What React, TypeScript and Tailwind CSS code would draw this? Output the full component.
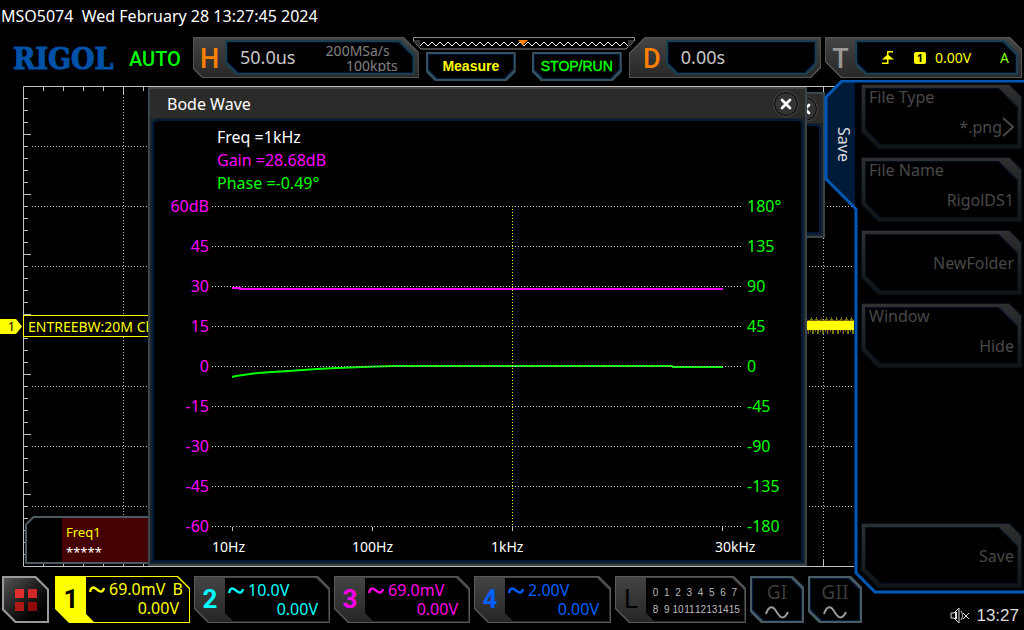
import React from "react";
import { X } from "lucide-react";

const channels = [
  { id: 2, scale: "10.0V", offset: "0.00V", color: "text-[#00ffff]" },
  { id: 3, scale: "69.0mV", offset: "0.00V", color: "text-[#ff00e6]" },
  { id: 4, scale: "2.00V", offset: "0.00V", color: "text-[#0060ff]" },
];

const gainLabels = ["60dB", "45", "30", "15", "0", "-15", "-30", "-45", "-60"];
const phaseLabels = ["180°", "135", "90", "45", "0", "-45", "-90", "-135", "-180"];

const menuItems = [
  { title: "File Type", value: "*.png", arrow: true },
  { title: "File Name", value: "RigolDS1" },
  { title: "", value: "NewFolder" },
  { title: "Window", value: "Hide" },
];

const range = (n: number) => Array.from({ length: n }, (_, i) => i);

const zigzag = range(53)
  .map((i) => `${7 + i * 4},${i % 2 ? 5 : 9}`)
  .join(" ");

const Tilde = () => (
  <svg width="16" height="10" viewBox="0 0 16 10" fill="none" stroke="currentColor" strokeWidth="2.4">
    <path d="M1 7C2 2 4 2 6 3L10 6C12 7 14 7 15 3" />
  </svg>
);

const TopPanel = ({ letter, color, outer, inner, className, children }: {
  letter: string;
  color: string;
  outer: string;
  inner: string;
  className: string;
  children: React.ReactNode;
}) => (
  <div className={`h-[41px] bg-[#565656] p-px ${outer} ${className}`}>
    <div className={`flex h-full bg-linear-to-b from-[#444] to-[#282828] pr-[3px] py-[2px] ${outer}`}>
      <span className={`shrink-0 text-center font-[Roboto] text-[27px] leading-[38px] font-medium ${color}`}>{letter}</span>
      <div className={`min-w-0 flex-1 bg-[#1d3f4d] p-[2px] ${inner}`}>
        <div className={`h-full bg-[#00102a] p-px ${inner}`}>
          <div className={`flex h-full items-center bg-black ${inner}`}>{children}</div>
        </div>
      </div>
    </div>
  </div>
);

const keyShape = "[clip-path:polygon(0_0,100%_0,100%_calc(100%-9px),calc(100%-9px)_100%,9px_100%,0_calc(100%-9px))]";

const TopKey = ({ label, className }: { label: string; className: string }) => (
  <button className={`h-[29px] w-[90px] bg-[#35505c] p-[2px] ${keyShape}`}>
    <span className={`block h-full bg-[#001a3c] p-px ${keyShape}`}>
      <span className={`block h-full bg-black text-center font-['Liberation_Sans'] leading-[22px] ${keyShape} ${className}`}>
        {label}
      </span>
    </span>
  </button>
);

const MemoryBar = () => (
  <svg width="222" height="13" fill="none">
    <path d="M0.5 0.5H221.5V4L213 12H8L0.5 4Z" stroke="#8a8a90" />
    <path d="M1 3V4L7 10V3ZM221 3V4L215 10V3Z" fill="#333338" />
    <polyline points={zigzag} stroke="#fff" />
    <path d="M105 3H115L110 8Z" fill="#ff8000" />
  </svg>
);

const TopBar = () => (
  <div className="flex h-[43px] items-start pr-[2px]">
    <div className="w-[126px] shrink-0 pl-[13px] font-['DejaVu_Serif_Condensed'] text-[30px] leading-[43px] font-bold text-[#0052a8] [-webkit-text-stroke:1px_#0052a8]">
      RIGOL
    </div>
    <div className="w-[67px] shrink-0 pl-[3px] font-[Roboto] text-[20px] font-medium leading-[44px] text-[#00ff00]">AUTO</div>
    <TopPanel
      letter="H"
      color="w-[31px] text-[#ff8000]"
      className="min-w-0 flex-[226]"
      outer="[clip-path:polygon(0_0,calc(100%-15px)_0,100%_15px,100%_100%,9px_100%,0_calc(100%-9px))]"
      inner="[clip-path:polygon(0_0,calc(100%-14px)_0,100%_14px,100%_100%,11px_100%,0_calc(100%-11px))]"
    >
      <span className="flex-1 pl-3 text-[18px] text-[#c8c8c8]">50.0us</span>
      <div className="pr-[14px] text-right text-[14px] leading-[15px] text-[#808080]">
        <div className="pr-2">200MSa/s</div>
        <div>100kpts</div>
      </div>
    </TopPanel>
    <div className="-mx-[6px] w-[222px] shrink-0">
      <MemoryBar />
      <div className="mt-[2px] flex justify-between px-[13px]">
        <TopKey label="Measure" className="text-[14px] font-bold text-[#ffff00]" />
        <TopKey label="STOP/RUN" className="text-[14px] text-[#00ff00] [-webkit-text-stroke:0.4px_#00ff00]" />
      </div>
    </div>
    <TopPanel
      letter="D"
      color="w-[36px] pl-2 text-[#ff8000]"
      className="min-w-0 flex-[192]"
      outer="[clip-path:polygon(16px_0,100%_0,100%_calc(100%-10px),calc(100%-10px)_100%,0_100%,0_16px)]"
      inner="[clip-path:polygon(0_0,100%_0,100%_calc(100%-10px),calc(100%-10px)_100%,10px_100%,0_calc(100%-10px))]"
    >
      <span className="pl-3 text-[18px] text-[#c8c8c8]">0.00s</span>
    </TopPanel>
    <TopPanel
      letter="T"
      color="w-[29px] text-[#999]"
      className="ml-1 min-w-0 flex-[197]"
      outer="[clip-path:polygon(0_0,calc(100%-12px)_0,100%_12px,100%_100%,16px_100%,0_calc(100%-16px))]"
      inner="[clip-path:polygon(0_0,calc(100%-13px)_0,100%_13px,100%_100%,10px_100%,0_calc(100%-10px))]"
    >
      <svg className="ml-6 shrink-0" width="12" height="14" fill="#ffff00">
        <path d="M5 0H11V1.5H6.5V4L12 8.5H6.5V13H0V11.5H5V8.5H0L5 4Z" />
      </svg>
      <span className="ml-5 h-3 w-3 rounded-xs bg-[#ffff00] text-center text-[11px] leading-3 font-bold text-black">1</span>
      <span className="ml-[9px] flex-1 text-[14px] text-[#ffff00]">0.00V</span>
      <span className="pr-[6px] text-[14px] text-[#80ff00]">A</span>
    </TopPanel>
  </div>
);

const Graticule = () => (
  <svg className="absolute inset-0 h-full w-full" fill="none" stroke="#c0c0c0">
    <path d="M860 6.5H23.5V486.5H860" />
    {range(40).map((i) => (
      <g key={i}>
        <path d={`M${43.5 + i * 20} 7V${i % 5 === 4 ? 14 : 11}`} />
        <path d={`M${43.5 + i * 20} 486V${i % 5 === 4 ? 479 : 482}`} />
        <path d={`M24 ${18.5 + i * 12}H${i % 5 === 3 ? 31 : 28}`} />
      </g>
    ))}
    <path d="M123.5 14V479M823.5 14V479" strokeDasharray="1 2" />
    {range(7).map((i) => (
      <path key={i} d={`M32 ${66.5 + i * 60}H854`} strokeDasharray="1 2" />
    ))}
    {range(48).map((i) => (
      <path key={i} d={`M${806.5 + i} ${237 + ((i * i * 7) % 5)}V${250 + ((i * i * 3 + i) % 5)}`} stroke={i % 7 === 1 ? "#501040" : "#787800"} />
    ))}
    <path d="M806 245.5H860" stroke="#ffff00" strokeWidth="9" />
  </svg>
);

const CloseButton = ({ label }: { label: string }) => (
  <button aria-label={label} className="flex h-6 w-6 items-center justify-center rounded-full border border-black bg-[#333] text-white outline outline-[#444]">
    <X size={16} strokeWidth={4} />
  </button>
);

const curve = "20,171 24,170 31,169 38,168 46,167 60,166 77,165 91,164 105,163 125,162 150,161 180,160 460,160 461,161 511,161";

const BodePlot = () => (
  <div className="flex text-[16px]">
    <div className="w-[55px] shrink-0 text-right text-[#ff00ff]">
      {gainLabels.map((label) => (
        <div key={label} className="h-10 leading-10">{label}</div>
      ))}
    </div>
    <div className="min-w-0 flex-1 px-[3px] pt-5">
      <svg className="w-full" height="328" viewBox="0 0 531 328" preserveAspectRatio="none" fill="none">
        <path d="M20.5 321V325M160.5 321V325M300.5 321V325M510.5 321V325" stroke="#c0c0c0" />
        <path d="M20 82H28V83H511" stroke="#ff00ff" strokeWidth="2" />
        <polyline points={curve} stroke="#00ff00" strokeWidth="2" />
        {range(9).map((i) => (
          <path key={i} d={`M0 ${0.5 + i * 40}H531`} stroke="#c0c0c0" strokeDasharray="1 2" />
        ))}
        <path d="M300.5 0V320" stroke="#ffff00" strokeDasharray="1 2" />
      </svg>
    </div>
    <div className="w-[55px] shrink-0 text-[#00ff00]">
      {phaseLabels.map((label) => (
        <div key={label} className="h-10 pl-px leading-10">{label}</div>
      ))}
    </div>
  </div>
);

const BodeWindow = () => (
  <section className="absolute top-[7px] right-[47px] left-[148px] border-2 border-[#38454b] border-t-[#444] bg-[#1c2328]">
    <header className="flex h-[29px] items-center justify-between bg-[#2b2c2a] pr-[7px] pl-[17px]">
      <h1 className="text-[16px] text-white">Bode Wave</h1>
      <CloseButton label="Close Bode Wave" />
    </header>
    <div className="mx-[2px] mt-px mb-[2px] rounded-t-md border-2 border-[#001a38] bg-black pb-[3px]">
      <div className="pt-[5px] pl-[63px] text-[16px] leading-[23px]">
        <p className="text-white">Freq =1kHz</p>
        <p className="text-[#ff00ff]">Gain =28.68dB</p>
        <p className="text-[#00ff00]">Phase =-0.49°</p>
      </div>
      <div className="-mt-[9px]">
        <BodePlot />
      </div>
      <div className="-mt-[9px] grid grid-cols-[140fr_139fr_224fr_86fr] pl-[58px] text-[14px] leading-5 text-white">
        <span>10Hz</span>
        <span>100Hz</span>
        <span>1kHz</span>
        <span>30kHz</span>
      </div>
    </div>
  </section>
);

const Scope = () => (
  <main className="relative min-h-[493px] flex-1 overflow-hidden">
    <Graticule />
    <div className="absolute top-[235px] left-[23px] h-[22px] w-[200px] border border-[#ffff00] bg-black pl-1 text-[14px] leading-[21px] whitespace-nowrap text-[#ffff00]">
      ENTREEBW:20M Ch1
    </div>
    <div className="absolute top-[239px] left-0 h-[15px] w-[22px] bg-[#ffff00] pl-2 text-[12px] leading-[15px] text-black [clip-path:polygon(0_0,16px_0,100%_50%,16px_100%,0_100%)]">
      1
    </div>
    <div className="absolute top-[436px] left-[25px] w-[200px] bg-[#4a5b62] p-[2px] [clip-path:polygon(8px_0,100%_0,100%_100%,0_100%,0_8px)]">
      <div className="bg-black pl-[35px] [clip-path:polygon(7px_0,100%_0,100%_100%,0_100%,0_7px)]">
        <div className="bg-[#450000] pt-1 pl-1 text-[13px] leading-[20px]">
          <p className="text-[#ffff00]">Freq1</p>
          <p className="text-white">*****</p>
        </div>
      </div>
    </div>
    <section className="absolute top-3 right-[29px] h-[146px] w-[200px] border-2 border-[#38454b] bg-[#1c2328]">
      <header className="flex h-[29px] items-center justify-end bg-[#2b2c2a] pr-[6px]">
        <CloseButton label="Close" />
      </header>
      <div className="mt-px mr-[2px] h-[110px] rounded-tr-md border-2 border-[#001a38] bg-black" />
    </section>
    <BodeWindow />
  </main>
);

const cardShape = "[clip-path:polygon(0_0,calc(100%-12px)_0,100%_12px,100%_100%,17px_100%,0_calc(100%-17px))]";
const cardInner = "[clip-path:polygon(0_0,calc(100%-19px)_0,100%_19px,100%_100%,15px_100%,0_calc(100%-15px))]";

const MenuCard = ({ title, value, arrow }: { title: string; value: string; arrow?: boolean }) => (
  <button className={`block h-[65px] w-full bg-[#04101c] p-px ${cardShape}`}>
    <span className={`block h-full bg-linear-to-b from-[#303030] to-[#121414] p-[3px] ${cardShape}`}>
      <span className={`block h-full bg-[#02101f] p-px ${cardInner}`}>
        <span className={`flex h-full flex-col bg-black px-[3px] text-[16px] leading-[22px] text-[#484848] ${cardInner}`}>
          {title && <span className="-mt-[3px] block text-left">{title}</span>}
          <span className={`flex items-center justify-end ${title ? "mt-2" : "my-auto"}`}>
            {value}
            {arrow && (
              <svg width="12" height="20" fill="none" stroke="currentColor" strokeWidth="2">
                <path d="M1 1L11 10L1 19" />
              </svg>
            )}
          </span>
        </span>
      </span>
    </span>
  </button>
);

const SideMenu = () => (
  <aside className="relative flex h-[514px] flex-col pt-1 pr-[2px] pb-[6px] pl-[7px]">
    <svg className="absolute top-0 -left-[30px]" width="200" height="514" fill="none">
      <path d="M1 100V18L16 1H31V128Z" fill="#001a3a" />
      <path d="M31 2H200V512H52L32 492Z" fill="#000" />
      <path d="M200 1H18L2 17V99L32 129V493L51 512H200" stroke="#0058b8" strokeWidth="3" />
    </svg>
    <span className="absolute top-[47px] -left-[22px] text-[16px] leading-[24px] text-[#ddd] [writing-mode:vertical-rl]">Save</span>
    <nav className="relative flex flex-1 flex-col gap-2">
      {menuItems.map((item) => (
        <MenuCard key={item.value} {...item} />
      ))}
      <div className="mt-auto">
        <MenuCard title="" value="Save" />
      </div>
    </nav>
  </aside>
);

const tileShape = "[clip-path:polygon(0_0,calc(100%-12px)_0,100%_12px,100%_100%,14px_100%,0_calc(100%-14px))]";
const tileInner = "[clip-path:polygon(0_0,calc(100%-12px)_0,100%_12px,100%_100%,8px_100%,0_calc(100%-8px))]";
const genShape = "[clip-path:polygon(0_0,calc(100%-11px)_0,100%_11px,100%_100%,11px_100%,0_calc(100%-11px))]";

const Tile = ({ label, color, children }: { label: string; color: string; children: React.ReactNode }) => (
  <button className={`block h-[47px] w-full bg-[#5a5a5a] p-px ${tileShape}`}>
    <span className={`flex h-full bg-linear-to-b from-[#444] to-[#262626] py-px pr-px ${tileShape}`}>
      <span className={`w-[30px] shrink-0 text-center font-[Roboto] text-[26px] leading-[43px] ${color}`}>{label}</span>
      <span className={`block min-w-0 flex-1 bg-black ${tileInner}`}>{children}</span>
    </span>
  </button>
);

const Reading = ({ scale, offset, limit }: { scale: string; offset: string; limit?: string }) => (
  <span className="block pt-[3px] text-[16px] leading-[19px]">
    <span className="flex items-center gap-1 pl-[3px]">
      <Tilde />
      {scale}
      {limit && <span className="ml-auto pr-[6px]">{limit}</span>}
    </span>
    <span className="block pr-[10px] text-right">{offset}</span>
  </span>
);

const Generator = ({ numeral }: { numeral: string }) => (
  <button className={`h-[47px] w-[54px] shrink-0 bg-[#4a5b62] p-[2px] ${genShape}`}>
    <span className={`block h-full bg-[#001a38] p-px ${genShape}`}>
      <span className={`flex h-full flex-col items-center bg-black text-[19px] leading-[27px] text-[#3c3c3c] ${genShape}`}>
        <span>
          G<span className="font-['DejaVu_Serif_Condensed']">{numeral}</span>
        </span>
        <svg width="24" height="13" fill="none" stroke="#999" strokeWidth="2">
          <path d="M1 8C4 -1 8 0 11 5S18 16 23 6" />
        </svg>
      </span>
    </span>
  </button>
);

const BottomBar = () => (
  <footer className="mt-[3px] mb-[7px] -mr-2 flex pl-[2px]">
    <button aria-label="Menu" className="mr-[6px] h-[47px] w-[47px] shrink-0 bg-[#999] p-[2px] [clip-path:polygon(0_0,calc(100%-13px)_0,100%_13px,100%_100%,13px_100%,0_calc(100%-13px))]">
      <span className="flex h-full items-center justify-center bg-linear-to-br from-[#555] to-black [clip-path:polygon(0_0,calc(100%-12px)_0,100%_12px,100%_100%,12px_100%,0_calc(100%-12px))]">
        <span className="grid grid-cols-2 gap-1">
          <span className="h-[9px] w-[9px] bg-[#e03030]" />
          <span className="h-[9px] w-[9px] bg-[#d02828]" />
          <span className="h-[9px] w-[9px] bg-[#b01818]" />
          <span className="h-[9px] w-[9px] bg-[#900808]" />
        </span>
      </span>
    </button>
    <div className="grid min-w-0 flex-1 grid-cols-[135fr_136fr_136fr_137fr_131fr] gap-1 pr-1">
      <button className={`flex h-[47px] bg-[#ffff00] p-px ${tileShape}`}>
        <span className="w-[30px] text-center font-[Roboto] text-[26px] leading-[44px] font-bold text-black">1</span>
        <span className={`block h-full min-w-0 flex-1 bg-black text-[#ffff00] ${tileInner}`}>
          <Reading scale="69.0mV" offset="0.00V" limit="B" />
        </span>
      </button>
      {channels.map((ch) => (
        <Tile key={ch.id} label={String(ch.id)} color={`font-bold ${ch.color}`}>
          <span className={ch.color}>
            <Reading scale={ch.scale} offset={ch.offset} />
          </span>
        </Tile>
      ))}
      <Tile label="L" color="text-black">
        <span className="grid grid-cols-8 px-1 pt-[6px] text-center font-['Liberation_Sans'] text-[10px] leading-[17px] text-[#bbb]">
          {range(16).map((i) => (
            <span key={i}>{i}</span>
          ))}
        </span>
      </Tile>
    </div>
    <div className="flex gap-1">
      <Generator numeral="I" />
      <Generator numeral="II" />
    </div>
  </footer>
);

const MutedSpeaker = () => (
  <svg width="20" height="18" fill="none" stroke="#ddd">
    <path d="M1 6H4L9 1V16L4 11H1Z" />
    <path d="M6 5V12" strokeWidth="2" />
    <path d="M11 4C13 7 13 10 11 13M13 6L19 12M19 6L13 12" />
  </svg>
);

export default function App() {
  return (
    <div className="flex min-h-screen flex-col overflow-hidden bg-black font-['Noto_Sans',sans-serif]">
      <div className="h-[37px] pl-px text-[16px] leading-8 whitespace-pre text-white">MSO5074  Wed February 28 13:27:45 2024</div>
      <TopBar />
      <div className="flex flex-1">
        <div className="flex min-w-0 flex-1 flex-col">
          <Scope />
          <BottomBar />
        </div>
        <div className="flex w-[170px] shrink-0 flex-col">
          <SideMenu />
          <div className="flex flex-1 items-center justify-end gap-[6px] pt-2 pr-[5px] font-['Liberation_Sans'] text-[17px] text-[#ddd]">
            <MutedSpeaker />
            <time>13:27</time>
          </div>
        </div>
      </div>
    </div>
  );
}
